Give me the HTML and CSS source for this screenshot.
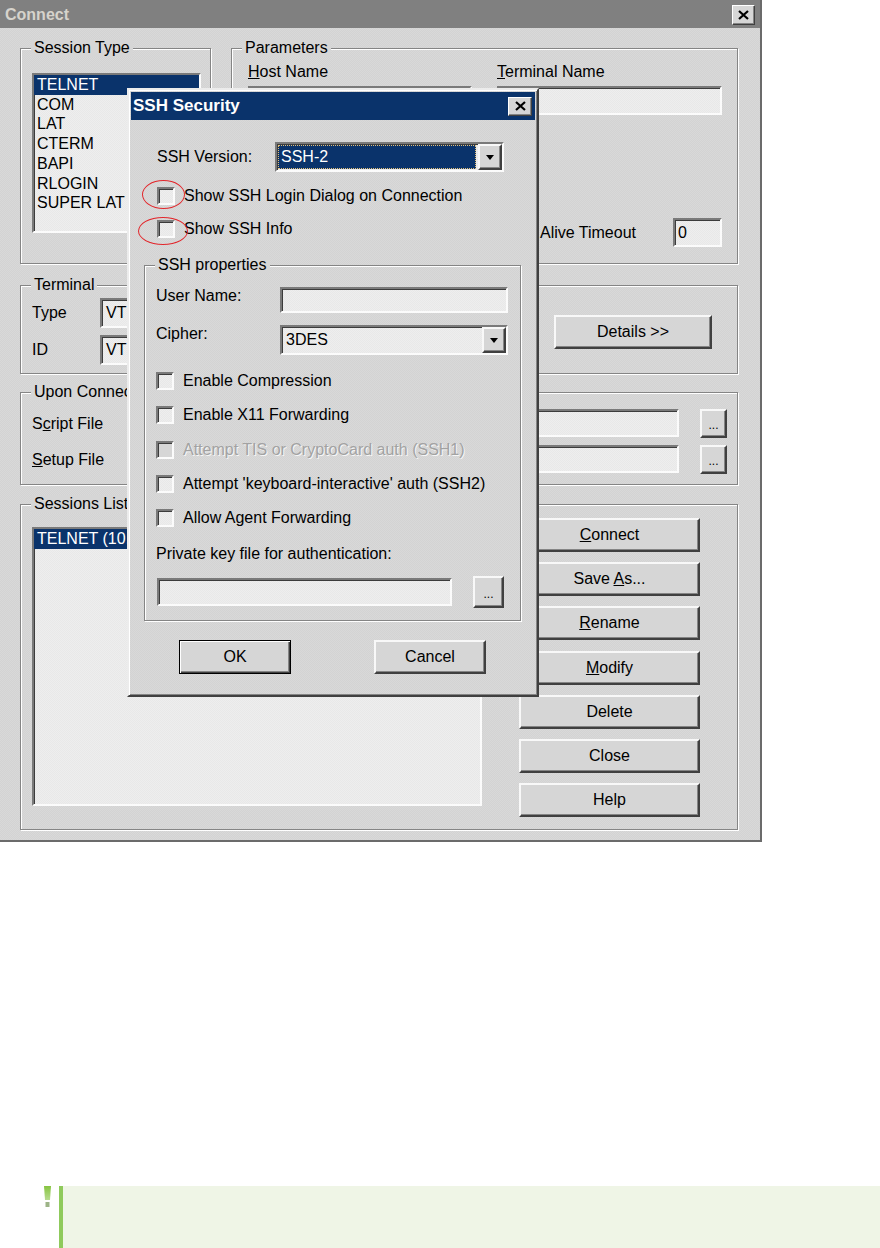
FILE: index.html
```html
<!DOCTYPE html>
<html>
  <head>
    <title>Connect</title>
    <meta charset="utf-8" />
    <link rel="stylesheet" href="styles.css">
  </head>
  <body>
    <div class="connect">
      <div class="titlebar">
        <span class="title">Connect</span>
        <span class="xbtn">
          <svg width="11" height="10" viewBox="0 0 11 10"><path d="M1 1L10 9M10 1L1 9" stroke="#000" stroke-width="2.2"/></svg>
        </span>
      </div>

      <div class="dlg-body">
        <div class="top-row">
          <div class="group session-type">
            <div class="caption">Session Type</div>
            <ul class="listbox types">
              <li class="sel">TELNET</li>
              <li>COM</li>
              <li>LAT</li>
              <li>CTERM</li>
              <li>BAPI</li>
              <li>RLOGIN</li>
              <li>SUPER LAT</li>
            </ul>
          </div>
          <div class="group params">
            <div class="caption">Parameters</div>
            <div class="param-grid">
              <span class="lbl"><u>H</u>ost Name</span>
              <span class="lbl"><u>T</u>erminal Name</span>
              <span class="field"></span>
              <span class="field"></span>
            </div>
            <div class="timeout-row">
              <span>Keep Alive Timeout</span>
              <span class="field timeout">0</span>
            </div>
          </div>
        </div>

        <div class="group terminal">
          <div class="caption">Terminal</div>
          <div class="term-row">
            <div class="term-fields">
              <span>Type</span>
              <span class="combo"><span class="combo-text">VT100</span><span class="combo-btn"><i class="arrow"></i></span></span>
              <span>ID</span>
              <span class="combo"><span class="combo-text">VT100</span><span class="combo-btn"><i class="arrow"></i></span></span>
            </div>
            <span class="btn details">Details &gt;&gt;</span>
          </div>
        </div>

        <div class="group upon">
          <div class="caption">Upon Connect</div>
          <div class="file-rows">
            <div class="file-row">
              <span class="file-lbl">S<u>c</u>ript File</span>
              <span class="field file"></span>
              <span class="btn dots">...</span>
            </div>
            <div class="file-row">
              <span class="file-lbl"><u>S</u>etup File</span>
              <span class="field file"></span>
              <span class="btn dots">...</span>
            </div>
          </div>
        </div>

        <div class="group sessions">
          <div class="caption">Sessions List</div>
          <div class="sess-row">
            <ul class="listbox sess-list">
              <li class="sel">TELNET (10.1.1.1)</li>
            </ul>
            <div class="sess-buttons">
              <span class="btn"><span><u>C</u>onnect</span></span>
              <span class="btn"><span>Save <u>A</u>s...</span></span>
              <span class="btn"><span><u>R</u>ename</span></span>
              <span class="btn"><span><u>M</u>odify</span></span>
              <span class="btn">Delete</span>
              <span class="btn">Close</span>
              <span class="btn">Help</span>
            </div>
          </div>
        </div>
      </div>

      <!-- modal on top of the Connect dialog -->
      <div class="ssh">
        <div class="ssh-title">
          <span>SSH Security</span>
          <span class="xbtn small">
            <svg width="11" height="10" viewBox="0 0 11 10"><path d="M1 1L10 9M10 1L1 9" stroke="#000" stroke-width="2.2"/></svg>
          </span>
        </div>
        <div class="ssh-body">
          <div class="ver-row">
            <span class="ver-lbl">SSH Version:</span>
            <span class="combo ver"><span class="combo-text sel">SSH-2</span><span class="combo-btn"><i class="arrow"></i></span></span>
          </div>
          <div class="check-row first"><span class="check"></span><span>Show SSH Login Dialog on Connection</span></div>
          <div class="check-row"><span class="check"></span><span>Show SSH Info</span></div>

          <div class="group ssh-props">
            <div class="caption">SSH properties</div>
            <div class="prop-row user">
              <span class="prop-lbl">User Name:</span>
              <span class="field user-field"></span>
            </div>
            <div class="prop-row cipher">
              <span class="prop-lbl">Cipher:</span>
              <span class="combo cipher-combo"><span class="combo-text">3DES</span><span class="combo-btn"><i class="arrow"></i></span></span>
            </div>
            <div class="check-row first"><span class="check"></span><span>Enable Compression</span></div>
            <div class="check-row"><span class="check"></span><span>Enable X11 Forwarding</span></div>
            <div class="check-row disabled"><span class="check"></span><span>Attempt TIS or CryptoCard auth (SSH1)</span></div>
            <div class="check-row"><span class="check"></span><span>Attempt 'keyboard-interactive' auth (SSH2)</span></div>
            <div class="check-row"><span class="check"></span><span>Allow Agent Forwarding</span></div>
            <div class="key-lbl">Private key file for authentication:</div>
            <div class="key-row">
              <span class="field key-field"></span>
              <span class="btn dots key-dots">...</span>
            </div>
          </div>

          <div class="ssh-buttons">
            <span class="btn default">OK</span>
            <span class="btn">Cancel</span>
          </div>
        </div>
      </div>

      <span class="mark mark-1"></span>
      <span class="mark mark-2"></span>
    </div>

    <div class="note">
      <svg class="note-icon" width="7" height="22" viewBox="0 0 7 22">
        <defs>
          <linearGradient id="bang" x1="0" y1="0" x2="0" y2="1">
            <stop offset="0" stop-color="#86c440"/>
            <stop offset="1" stop-color="#b9dc90"/>
          </linearGradient>
        </defs>
        <path d="M0 0H7L6 14H1Z" fill="url(#bang)"/>
        <rect x="1.5" y="16" width="4" height="5" fill="#9db487"/>
      </svg>
      <div class="note-box"></div>
    </div>
  </body>
</html>
```

FILE: styles.css
```css
* {
  box-sizing: border-box;
}
body {
  margin: 0;
  background: #fff;
  font: 16px/18px "Liberation Sans", Arial, sans-serif;
  color: #000;
}
ul {
  list-style: none;
  margin: 0;
  padding: 0;
}

/* classic window look */
.connect {
  position: relative;
  width: 762px;
  height: 842px;
  border-right: 2px solid #6b6b6b;
  border-bottom: 2px solid #6b6b6b;
  background: repeating-conic-gradient(#d3d3d3 0 25%, #d9d9d9 0 50%) 0 0 / 2px 2px;
}
.titlebar {
  height: 28px;
  padding: 2px 5px 0 5px;
  display: flex;
  align-items: center;
  justify-content: space-between;
  background: #808080;
}
.titlebar .title {
  font-weight: bold;
  color: #d6d3cc;
}
.xbtn {
  width: 23px;
  height: 20px;
  display: flex;
  align-items: center;
  justify-content: center;
  background: #d6d6d6;
  border: 1px solid;
  border-color: #fff #404040 #404040 #fff;
  box-shadow: inset -1px -1px #858585;
}
.xbtn.small {
  width: 24px;
  height: 19px;
}

.dlg-body {
  padding: 20px 22px 0 20px;
}
.top-row {
  display: flex;
  gap: 20px;
  height: 216px;
}

.group {
  border: 1px solid #858585;
  box-shadow: inset 1px 1px #fff, 1px 1px #fff;
  padding: 0 10px 0 11px;
}
.caption {
  width: max-content;
  margin: -10px 0 0 -1px;
  padding: 0 3px;
  line-height: 18px;
  background: #d6d6d6;
  white-space: nowrap;
}

.listbox,
.field,
.combo,
.check {
  border: 2px solid;
  border-color: #7a7a7a #fbfbfb #fbfbfb #7a7a7a;
  box-shadow: inset 1px 1px #3c3c3c;
  background: repeating-conic-gradient(#e8e8e8 0 25%, #eeeeee 0 50%) 0 0 / 2px 2px;
}
.listbox {
  overflow: hidden;
}
.listbox li {
  line-height: 19.7px;
  padding-left: 3px;
  white-space: nowrap;
}
.listbox li.sel {
  background: #0a336b;
  color: #fff;
}

.session-type {
  width: 191px;
  flex: none;
}
.types {
  width: 169px;
  height: 160px;
  margin-top: 16px;
}
.params {
  flex: 1;
}
.param-grid {
  display: grid;
  grid-template-columns: 224px 225px;
  column-gap: 25px;
  row-gap: 5px;
  margin: 6px 0 0 5px;
}
.param-grid .field {
  height: 29px;
}
.field {
  display: flex;
  align-items: center;
  padding-left: 3px;
}
.timeout-row {
  display: flex;
  justify-content: flex-end;
  align-items: center;
  gap: 37px;
  margin: 103px 5px 0 0;
  white-space: nowrap;
}
.timeout {
  width: 49px;
  height: 29px;
}

.combo {
  display: flex;
}
.combo-text {
  flex: 1;
  display: flex;
  align-items: center;
  padding-left: 4px;
  white-space: nowrap;
}
.combo-text.sel {
  margin: 1px 2px 1px 1px;
  padding-left: 3px;
  background: #0a336b;
  color: #fff;
  outline: 1px dotted #e3c078;
  outline-offset: -1px;
}
.combo-btn {
  width: 24px;
  flex: none;
  display: flex;
  align-items: center;
  justify-content: center;
  background: #d6d6d6;
  border: 2px solid;
  border-color: #f8f8f8 #404040 #404040 #f8f8f8;
  box-shadow: inset -1px -1px #858585;
}
.arrow {
  border-left: 4.5px solid transparent;
  border-right: 4.5px solid transparent;
  border-top: 5px solid #000;
}

.btn {
  display: flex;
  align-items: center;
  justify-content: center;
  background: #d6d6d6;
  border: 2px solid;
  border-color: #f8f8f8 #404040 #404040 #f8f8f8;
  box-shadow: inset -1px -1px #858585;
  white-space: nowrap;
}
.btn.default {
  border: 1px solid #000;
  box-shadow: inset 1px 1px #fff, inset -1px -1px #404040, inset -2px -2px #858585;
}
.dots {
  font-size: 12px;
  padding-top: 3px;
}

.terminal {
  margin-top: 21px;
  height: 89px;
}
.term-row {
  display: flex;
  align-items: center;
  margin-top: 4px;
}
.term-fields {
  display: grid;
  grid-template-columns: 68px 200px;
  grid-auto-rows: 30px;
  row-gap: 7px;
  align-items: center;
}
.term-fields .combo {
  height: 30px;
}
.details {
  width: 158px;
  height: 34px;
  margin: 0 15px 0 auto;
}

.upon {
  margin-top: 18px;
  height: 93px;
}
.file-rows {
  display: flex;
  flex-direction: column;
  gap: 7px;
  margin-top: 8px;
}
.file-row {
  display: flex;
  align-items: flex-start;
  height: 29px;
}
.file-lbl {
  width: 104px;
  flex: none;
  line-height: 29px;
  white-space: nowrap;
}
.file {
  flex: 1;
  height: 28px;
}
.file-row .dots {
  width: 27px;
  height: 29px;
  margin-left: 21px;
}

.sessions {
  margin-top: 19px;
  height: 326px;
}
.sess-row {
  display: flex;
}
.sess-list {
  width: 450px;
  height: 279px;
  margin-top: 14px;
  flex: none;
}
.sess-buttons {
  display: flex;
  flex-direction: column;
  gap: 10.2px;
  width: 181px;
  margin: 5px 0 0 37px;
}
.sess-buttons .btn {
  height: 34px;
}

/* SSH Security modal */
.ssh {
  position: absolute;
  left: 127px;
  top: 88px;
  width: 412px;
  height: 609px;
  padding: 2px;
  background: repeating-conic-gradient(#d3d3d3 0 25%, #d9d9d9 0 50%) 0 0 / 2px 2px;
  border: 2px solid;
  border-color: #ececec #404040 #404040 #ececec;
  box-shadow: inset 1px 1px #fff, inset -1px -1px #858585;
}
.ssh-title {
  height: 28px;
  padding: 0 3px 0 2px;
  display: flex;
  align-items: center;
  justify-content: space-between;
  background: #0a336b;
  color: #fff;
  font-weight: bold;
  font-size: 17px;
}
.ssh-body {
  padding-left: 26px;
}
.ver-row {
  display: flex;
  align-items: center;
  margin-top: 22px;
}
.ver-lbl {
  width: 118px;
}
.combo.ver {
  width: 229px;
  height: 30px;
}
.check-row {
  display: flex;
  align-items: center;
  gap: 9px;
  height: 18px;
  margin-top: 15px;
  white-space: nowrap;
}
.check {
  width: 18px;
  height: 18px;
  flex: none;
}
.check-row.disabled {
  color: #a2a2a2;
  text-shadow: 1px 1px 0 #f6f6f6;
}
.check-row.disabled .check {
  background: #d6d6d6;
}

.ssh-props {
  width: 377px;
  height: 356px;
  margin: 27px 0 0 -13px;
}
.ssh-props .check-row {
  margin-top: 16.25px;
}
.ssh-props .check-row.first {
  margin-top: 17px;
}
.prop-row {
  display: flex;
  align-items: flex-start;
}
.prop-row.user {
  margin-top: 13px;
}
.prop-row.cipher {
  margin-top: 12px;
}
.prop-lbl {
  width: 124px;
  flex: none;
}
.user-field {
  width: 228px;
  height: 26px;
}
.cipher-combo {
  width: 228px;
  height: 30px;
}
.key-lbl {
  margin-top: 18px;
  white-space: nowrap;
}
.key-row {
  display: flex;
  align-items: center;
  height: 32px;
  margin-top: 13px;
}
.key-field {
  width: 295px;
  height: 28px;
  margin-left: 1px;
}
.key-dots {
  width: 31px;
  height: 32px;
  margin-left: 21px;
}
.ssh-buttons {
  display: flex;
  gap: 83px;
  margin: 19px 0 0 22px;
}
.ssh-buttons .btn {
  width: 112px;
  height: 34px;
}

/* red annotation rings */
.mark {
  position: absolute;
  border: 1.5px solid #e2262b;
  border-radius: 50%;
}
.mark-1 {
  left: 142px;
  top: 180px;
  width: 43px;
  height: 29px;
}
.mark-2 {
  left: 138px;
  top: 217px;
  width: 50px;
  height: 28px;
}

.note {
  display: flex;
  gap: 8px;
  margin-top: 344px;
  padding-left: 44px;
}
.note-icon {
  flex: none;
}
.note-box {
  flex: 1;
  height: 62px;
  background: #eff5e6;
  border-left: 4px solid #8fca5c;
}
```
